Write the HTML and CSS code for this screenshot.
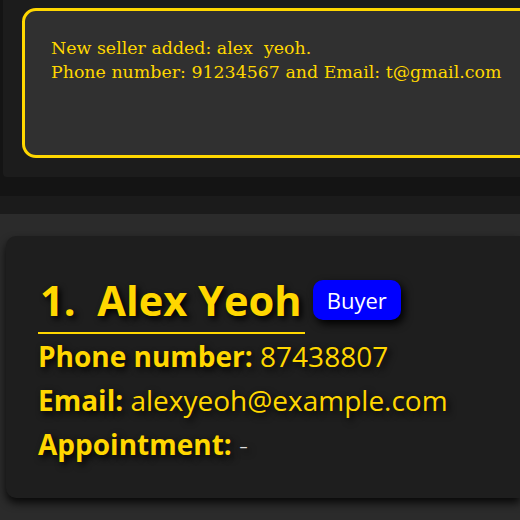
FILE: index.html
```html
<!DOCTYPE html>
<html>
<head>
<meta charset="utf-8">
<link rel="stylesheet" href="styles.css">
</head>
<body>
<div class="top">
  <div class="result">
    <p>New seller added: alex&nbsp; yeoh.</p>
    <p>Phone number: 91234567 and Email: t@gmail.com</p>
  </div>
</div>
<div class="band"></div>
<div class="list">
  <div class="card">
    <div class="head">
      <div class="name">1.&nbsp; Alex Yeoh</div>
      <span class="tag">Buyer</span>
    </div>
    <div class="row"><b>Phone number:</b> 87438807</div>
    <div class="row"><b>Email:</b> alexyeoh@example.com</div>
    <div class="row"><b>Appointment:</b> <span class="dash">-</span></div>
  </div>
</div>
</body>
</html>
```
FILE: styles.css
```css
html, body { margin: 0; padding: 0; }
body {
  background: #141414;
  width: 520px;
  height: 520px;
  overflow: hidden;
}
.top {
  margin-left: 3px;
  height: 169px;
  padding: 8px 0 0 19px;
  background: #1c1c1c;
  border-bottom-left-radius: 4px;
  overflow: hidden;
}
.result {
  width: 560px;
  height: 144px;
  box-sizing: content-box;
  border: 3px solid #ffd700;
  border-radius: 14px;
  background: #303030;
  padding: 0;
}
.result p {
  margin: 0;
  padding-left: 26px;
  font-family: "DejaVu Serif", serif;
  font-size: 17.4px;
  line-height: 24px;
  color: #ffd700;
}
.result p:first-child { padding-top: 25px; }
.band {
  height: 18px;
  margin-top: 19px;
  background: #1b1b1b;
}
.list {
  background: #2b2b2b;
  padding: 22px 0 40px 6px;
}
.card {
  height: 262px;
  box-sizing: border-box;
  background: #1e1e1e;
  border-radius: 10px 0 0 10px;
  box-shadow: 0 5px 8px rgba(0,0,0,0.8);
  padding: 32px 0 0 32px;
  font-family: "Open Sans", sans-serif;
  color: #ffd700;
}
.head {
  display: flex;
  align-items: center;
  gap: 8px;
}
.name {
  font-size: 41.6px;
  font-weight: 700;
  line-height: 64px;
  border-bottom: 2px solid #ffd700;
  padding: 0 3px 0 2px;
  text-shadow: 3px 3px 6px #000;
}
.tag {
  background: #0000ff;
  color: #fff;
  font-size: 22px;
  line-height: 40px;
  padding: 0 14px;
  border-radius: 10px;
  box-shadow: 3px 4px 8px #000;
  margin-bottom: 2px;
}
.row {
  font-size: 28px;
  line-height: 44px;
  text-shadow: 3px 3px 7px #000;
}
.row b { font-weight: 700; }
.dash { color: #ddd; font-weight: 300; }
```
